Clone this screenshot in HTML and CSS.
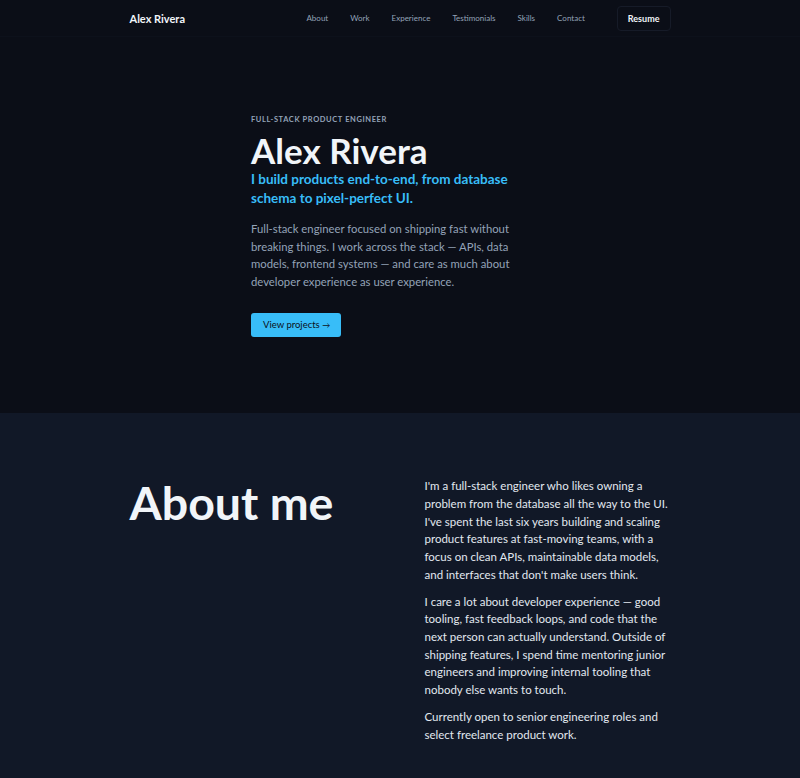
FILE: index.html
```html
<!DOCTYPE html>
<html lang="en">
<head>
<meta charset="utf-8">
<title>Alex Rivera</title>
<link rel="stylesheet" href="styles.css">
</head>
<body>
<header class="site-header">
  <div class="container header-inner">
    <a class="brand" href="#">Alex Rivera</a>
    <nav class="nav">
      <a href="#about">About</a>
      <a href="#work">Work</a>
      <a href="#experience">Experience</a>
      <a href="#testimonials">Testimonials</a>
      <a href="#skills">Skills</a>
      <a href="#contact">Contact</a>
    </nav>
    <a class="resume" href="#">Resume</a>
  </div>
</header>
<main>
  <section class="hero">
    <div class="hero-inner">
      <p class="eyebrow">Full-stack product engineer</p>
      <h1 class="hero-title">Alex Rivera</h1>
      <p class="hero-sub">I build products end-to-end, from database schema to pixel-perfect UI.</p>
      <p class="hero-text">Full-stack engineer focused on shipping fast without breaking things. I work across the stack — APIs, data models, frontend systems — and care as much about developer experience as user experience.</p>
      <a class="btn" href="#work">View projects <span class="arrow">→</span></a>
    </div>
  </section>
  <section class="about" id="about">
    <div class="container about-grid">
      <h2 class="about-title">About me</h2>
      <div class="about-body">
        <p>I'm a full-stack engineer who likes owning a problem from the database all the way to the UI. I've spent the last six years building and scaling product features at fast-moving teams, with a focus on clean APIs, maintainable data models, and interfaces that don't make users think.</p>
        <p>I care a lot about developer experience — good tooling, fast feedback loops, and code that the next person can actually understand. Outside of shipping features, I spend time mentoring junior engineers and improving internal tooling that nobody else wants to touch.</p>
        <p>Currently open to senior engineering roles and select freelance product work.</p>
      </div>
    </div>
  </section>
</main>
</body>
</html>
```
FILE: styles.css
```css
* { box-sizing: border-box; }
html, body { margin: 0; padding: 0; }
body {
  background: #0b0e17;
  color: #e5e7eb;
  font-family: "Lato", "Noto Sans", sans-serif;
}
a { text-decoration: none; color: inherit; }
.container {
  max-width: 541px;
  margin: 0 auto;
}
.site-header {
  background: #0b0e17;
  border-bottom: 1px solid #0d111b;
}
.header-inner {
  display: flex;
  align-items: center;
  height: 36px;
}
.brand {
  font-weight: 700;
  font-size: 11px;
  color: #f1f5f9;
}
.nav {
  margin-left: auto;
  display: flex;
  gap: 22px;
  font-size: 8px;
  color: #94a3b8;
}
.resume {
  margin-left: 32px;
  border: 1px solid #161b28;
  border-radius: 4px;
  padding: 6px 10px;
  font-size: 9px;
  font-weight: 700;
  color: #f1f5f9;
}
.hero {
  padding: 78px 0 76px;
  background: #0b0e17;
}
.hero-inner {
  max-width: 298px;
  margin: 0 auto;
}
.eyebrow {
  margin: 0 0 6px;
  text-transform: uppercase;
  font-size: 7.5px;
  letter-spacing: 0.6px;
  font-weight: 700;
  color: #94a3b8;
}
.hero-title {
  margin: 0;
  font-size: 35px;
  line-height: 40px;
  font-weight: 700;
  color: #f1f5f9;
}
.hero-sub {
  margin: 0 0 12px;
  font-size: 13.5px;
  line-height: 19px;
  font-weight: 700;
  color: #38bdf8;
}
.hero-text {
  margin: 0 0 22px;
  max-width: 268px;
  font-size: 11.3px;
  line-height: 17.6px;
  color: #94a3b8;
}
.btn {
  display: inline-block;
  background: #38bdf8;
  color: #0b1220;
  border-radius: 3px;
  font-size: 9.5px;
  padding: 6px 11px 6px 12px;
  line-height: 12px;
}
.arrow {
  font-size: 8px;
}
.about {
  background: #111827;
  padding: 64px 0 60px;
}
.about-grid {
  display: grid;
  grid-template-columns: 1fr 1fr;
  gap: 49px;
}
.about-title {
  margin: 0;
  font-size: 46.5px;
  line-height: 50px;
  font-weight: 700;
  color: #f1f5f9;
}
.about-body p {
  margin: 0 0 9px;
  font-size: 11.5px;
  line-height: 17.7px;
  color: #e2e8f0;
}
```
